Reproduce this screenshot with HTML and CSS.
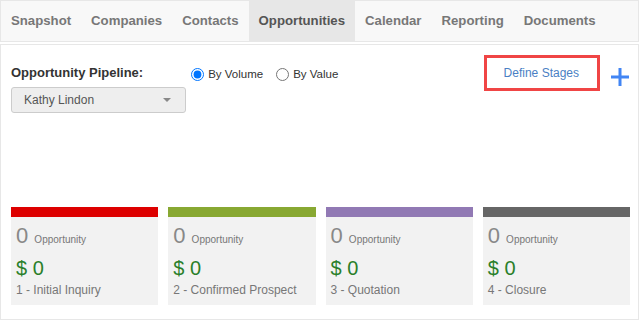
FILE: index.html
```html
<!DOCTYPE html>
<html lang="en">
<head>
  <meta charset="UTF-8" />
  <title>Opportunities</title>
  <link rel="stylesheet" href="styles.css">
</head>
<body>
  <div class="app">
    <ul class="nav">
      <li><a href="#">Snapshot</a></li>
      <li><a href="#">Companies</a></li>
      <li><a href="#">Contacts</a></li>
      <li class="active"><a href="#">Opportunities</a></li>
      <li><a href="#">Calendar</a></li>
      <li><a href="#">Reporting</a></li>
      <li><a href="#">Documents</a></li>
    </ul>

    <div class="panel">
      <div class="toolbar">
        <div class="pipeline">
          <div class="pipeline-head">
            <span class="pipeline-label">Opportunity Pipeline:</span>
            <label class="radio"><input type="radio" name="mode" checked> By Volume</label>
            <label class="radio"><input type="radio" name="mode"> By Value</label>
          </div>
          <div class="owner-select">
            <span>Kathy Lindon</span>
            <span class="caret"></span>
          </div>
        </div>
        <div class="actions">
          <a href="#" class="define">Define Stages</a>
          <a href="#" class="add" title="Add">
            <svg width="20" height="20" viewBox="0 0 20 20">
              <path d="M10 1v18M1 10h18" stroke="#4285f4" stroke-width="3" fill="none"/>
            </svg>
          </a>
        </div>
      </div>

      <div class="stages">
        <div class="stage">
          <div class="stage-bar red"></div>
          <div class="stage-body">
            <div class="count">0 <small>Opportunity</small></div>
            <div class="amount">$ 0</div>
            <div class="stage-name">1 - Initial Inquiry</div>
          </div>
        </div>
        <div class="stage">
          <div class="stage-bar green"></div>
          <div class="stage-body">
            <div class="count">0 <small>Opportunity</small></div>
            <div class="amount">$ 0</div>
            <div class="stage-name">2 - Confirmed Prospect</div>
          </div>
        </div>
        <div class="stage">
          <div class="stage-bar purple"></div>
          <div class="stage-body">
            <div class="count">0 <small>Opportunity</small></div>
            <div class="amount">$ 0</div>
            <div class="stage-name">3 - Quotation</div>
          </div>
        </div>
        <div class="stage">
          <div class="stage-bar grey"></div>
          <div class="stage-body">
            <div class="count">0 <small>Opportunity</small></div>
            <div class="amount">$ 0</div>
            <div class="stage-name">4 - Closure</div>
          </div>
        </div>
      </div>
    </div>
  </div>
</body>
</html>
```

FILE: styles.css
```css
body {
  margin: 0;
  font-family: "Liberation Sans", Arial, sans-serif;
  background: #fff;
  color: #333;
}
.app {
  width: 639px;
}
.nav {
  display: flex;
  list-style: none;
  margin: 0 0 2px;
  padding: 0;
  background: #f8f8f8;
  border: 1px solid #e7e7e7;
}
.nav a {
  display: block;
  padding: 10px;
  line-height: 20px;
  font-size: 13.2px;
  font-weight: bold;
  color: #777;
  text-decoration: none;
}
.nav .active a {
  background: #e7e7e7;
  color: #555;
}
.panel {
  border: 1px solid #e7e7e7;
  padding: 10px 8px 14px 10px;
}
.toolbar {
  display: flex;
  justify-content: space-between;
  align-items: flex-start;
}
.pipeline-head {
  display: flex;
  align-items: flex-start;
  margin-top: 10px;
  line-height: 16px;
}
.pipeline-label {
  font-size: 13px;
  font-weight: bold;
  color: #333;
  margin-right: 48px;
}
.radio {
  display: flex;
  align-items: center;
  margin-top: 1px;
  font-size: 11.5px;
  color: #333;
  margin-right: 13px;
}
.radio input {
  margin: 0 4px 0 0;
  width: 13px;
  height: 13px;
}
.owner-select {
  display: flex;
  justify-content: space-between;
  align-items: center;
  box-sizing: border-box;
  width: 175px;
  height: 26px;
  margin-top: 5px;
  padding: 0 12px;
  background: #eee;
  border: 1px solid #ccc;
  border-radius: 3px;
  font-size: 12px;
  color: #555;
}
.caret {
  width: 0;
  height: 0;
  border-left: 4px solid transparent;
  border-right: 4px solid transparent;
  border-top: 4px solid #888;
  margin-right: 2px;
}
.actions {
  display: flex;
  align-items: center;
}
.define {
  display: block;
  border: 3px solid #f04545;
  padding: 0 18px 0 17px;
  line-height: 30px;
  font-size: 12px;
  color: #4a7fc4;
  text-decoration: none;
}
.add {
  display: block;
  margin: 7px 0 0 10px;
  line-height: 0;
}
.stages {
  display: grid;
  grid-template-columns: repeat(4, 1fr);
  gap: 10px;
  margin-top: 94px;
}
.stage-bar {
  height: 10px;
}
.red { background: #dd0000; }
.green { background: #88a832; }
.purple { background: #9179b4; }
.grey { background: #666; }
.stage-body {
  background: #f2f2f2;
  padding: 6px 5px 7px;
}
.count {
  font-size: 22px;
  line-height: 26px;
  color: #888;
}
.count small {
  font-size: 10px;
  color: #777;
}
.amount {
  margin-top: 3px;
  font-size: 20px;
  line-height: 24px;
  color: #2a7f2a;
}
.stage-name {
  margin-top: 2px;
  font-size: 12px;
  line-height: 16px;
  color: #777;
}
```
